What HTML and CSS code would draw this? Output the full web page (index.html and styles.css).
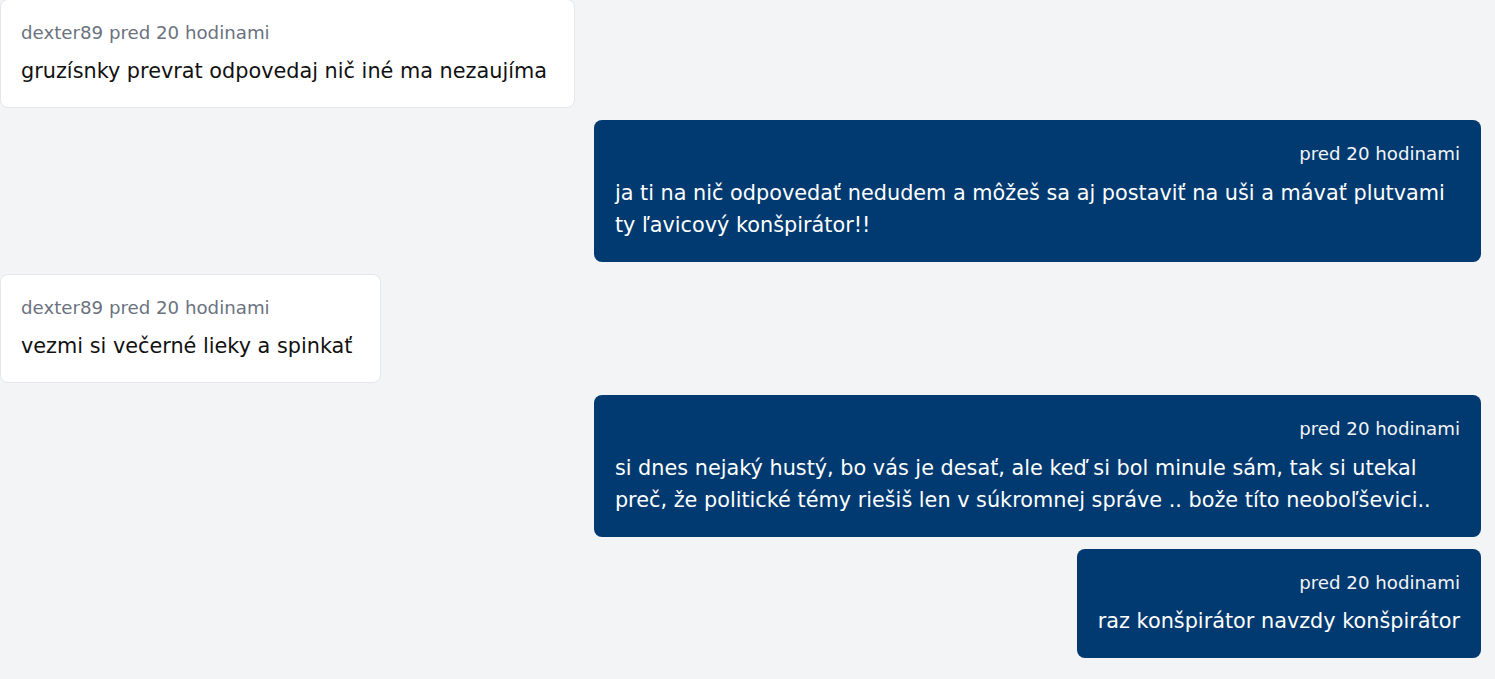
FILE: index.html
```html
<!DOCTYPE html>
<html lang="sk">
<head>
<meta charset="utf-8">
<link rel="stylesheet" href="styles.css">
</head>
<body>
<div class="chat">
  <div class="msg msg-in">
    <div class="meta">dexter89 pred 20 hodinami</div>
    <div class="text">gruzísnky prevrat odpovedaj nič iné ma nezaujíma</div>
  </div>
  <div class="msg msg-out">
    <div class="meta">pred 20 hodinami</div>
    <div class="text">ja ti na nič odpovedať nedudem a môžeš sa aj postaviť na uši a mávať plutvami ty ľavicový konšpirátor!!</div>
  </div>
  <div class="msg msg-in">
    <div class="meta">dexter89 pred 20 hodinami</div>
    <div class="text">vezmi si večerné lieky a spinkať</div>
  </div>
  <div class="msg msg-out">
    <div class="meta">pred 20 hodinami</div>
    <div class="text">si dnes nejaký hustý, bo vás je desať, ale keď si bol minule sám, tak si utekal preč, že politické témy riešiš len v súkromnej správe .. bože títo neoboľševici..</div>
  </div>
  <div class="msg msg-out">
    <div class="meta">pred 20 hodinami</div>
    <div class="text">raz konšpirátor navzdy konšpirátor</div>
  </div>
</div>
</body>
</html>
```
FILE: styles.css
```css
html, body {
  margin: 0;
  padding: 0;
  background: #f3f4f6;
}
body {
  font-family: "DejaVu Sans", sans-serif;
  overflow: hidden;
}
.chat {
  display: flex;
  flex-direction: column;
  gap: 12px;
  padding: 0 14px 0 0;
  margin-top: -1.5px;
}
.msg {
  max-width: 59.9%;
  border-radius: 8px;
  padding: 20px;
  border: 1px solid transparent;
  box-sizing: border-box;
}
.msg-in {
  align-self: flex-start;
  padding-right: 27px;
  background: #ffffff;
  border-color: #e5e7eb;
  color: #111111;
}
.msg-out {
  align-self: flex-end;
  background: #003a70;
  color: #ffffff;
  text-align: right;
}
.meta {
  font-size: 18.2px;
  line-height: 26px;
  margin-bottom: 9.5px;
  color: #6b7280;
}
.msg-out .meta {
  color: #f3f4f6;
}
.text {
  font-size: 20.8px;
  line-height: 32px;
}
.msg-out .text {
  text-align: left;
}
```
